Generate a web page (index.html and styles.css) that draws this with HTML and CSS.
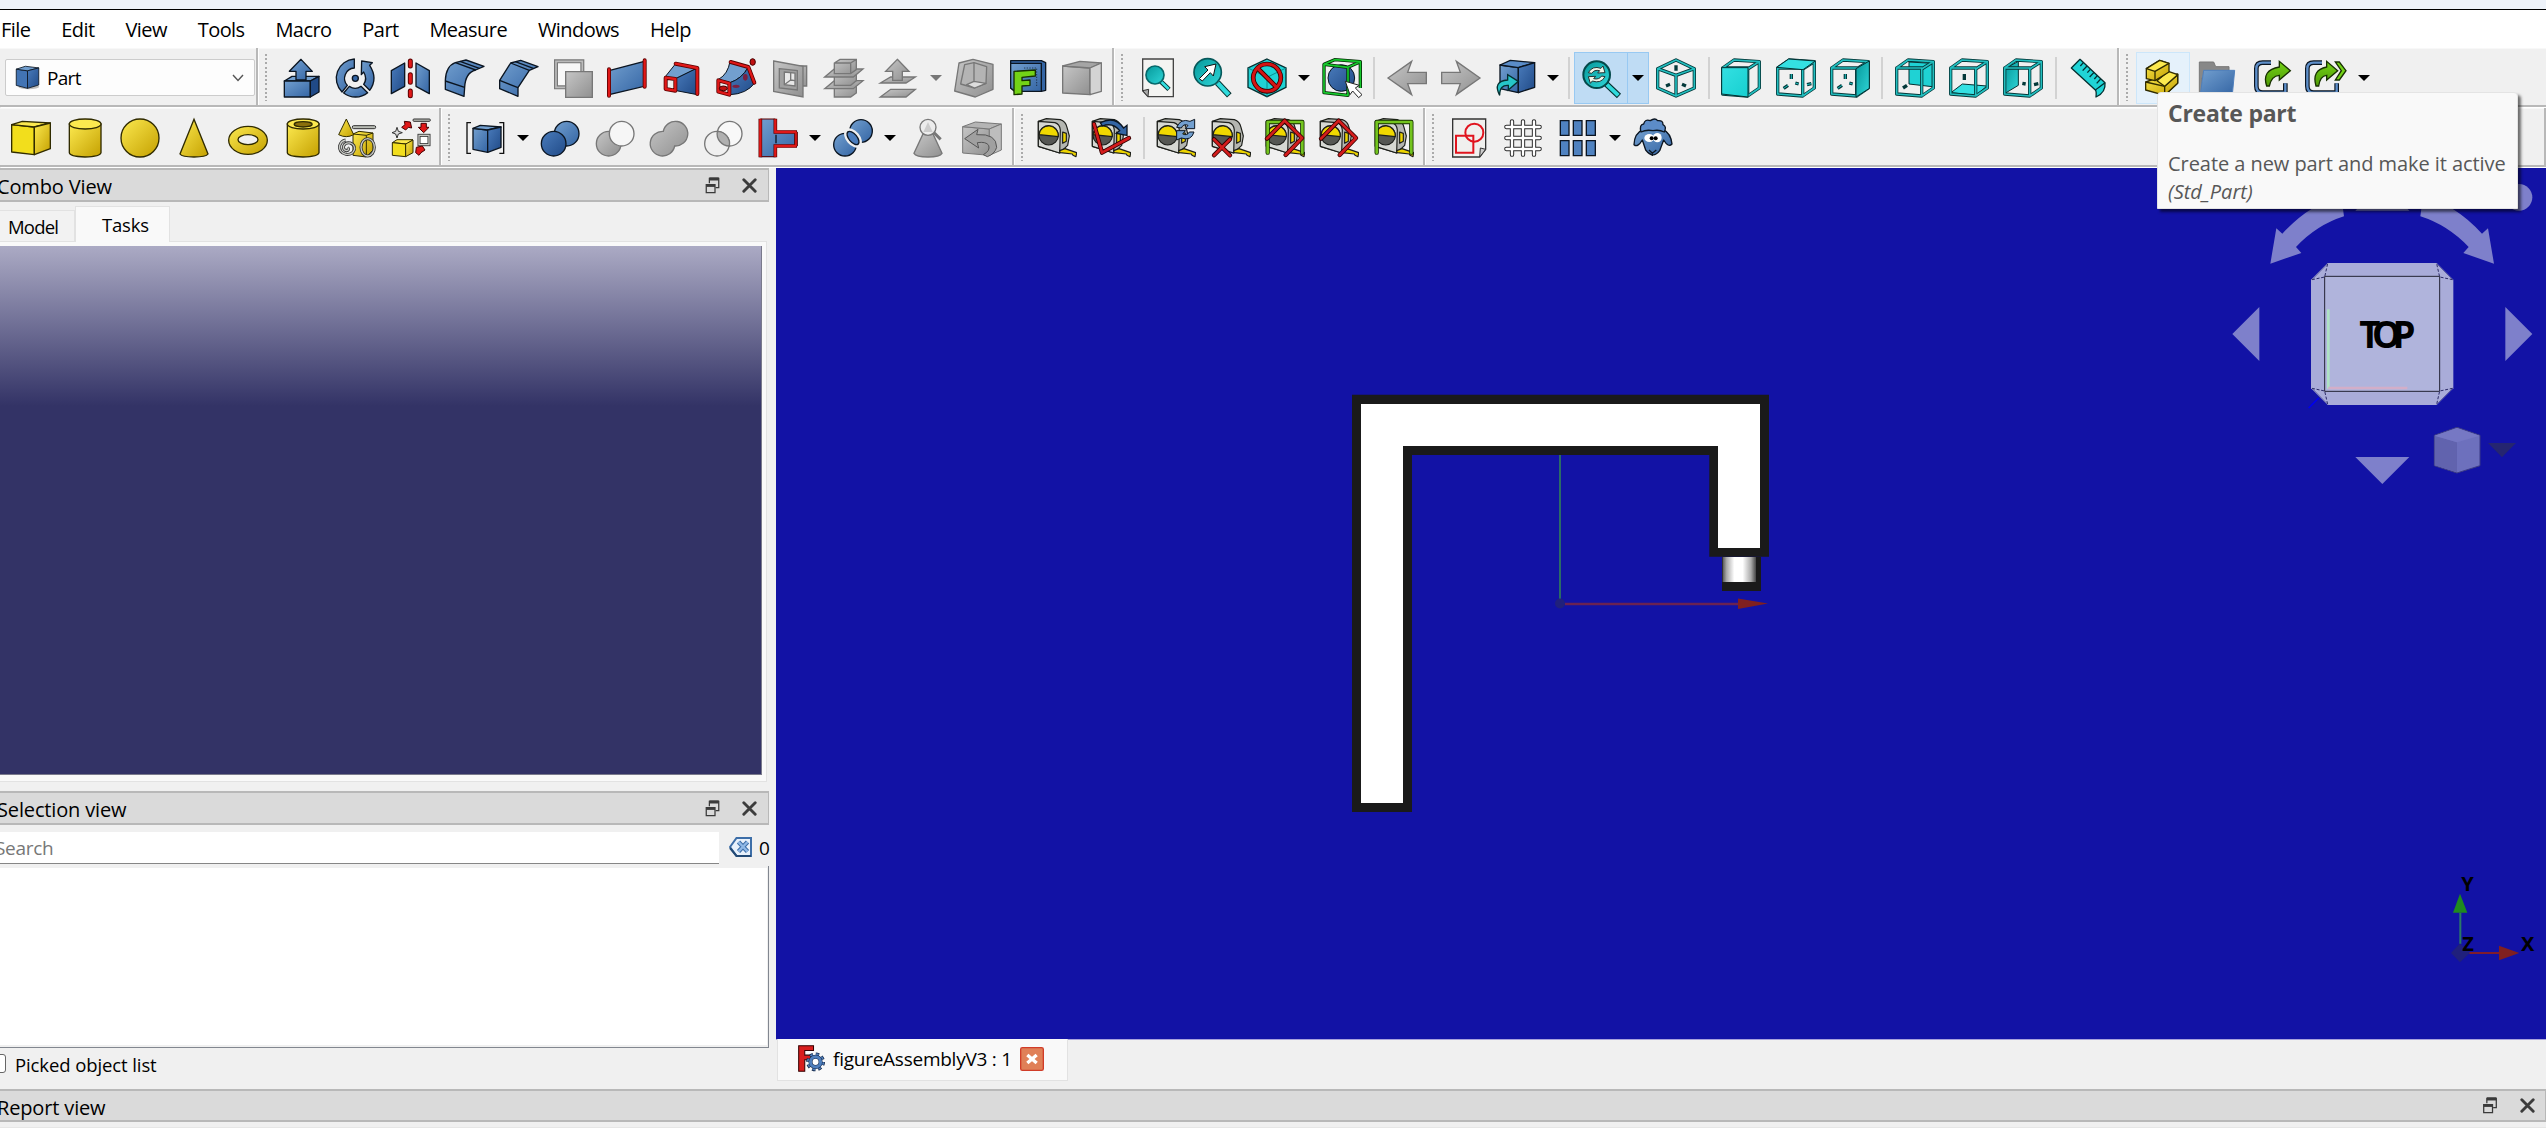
FILE: index.html
```html
<!DOCTYPE html>
<html lang="en">
<head>
<meta charset="utf-8">
<title>FreeCAD</title>
<link rel="stylesheet" href="styles.css">
</head>
<body>
<svg class="defs" width="0" height="0" aria-hidden="true">
  <defs>
    <linearGradient id="gb" x1="0" y1="0" x2="1" y2="1"><stop offset="0" stop-color="#729fcf"/><stop offset="1" stop-color="#3465a4"/></linearGradient>
    <linearGradient id="gd" x1="0" y1="0" x2="1" y2="1"><stop offset="0" stop-color="#4a7cbc"/><stop offset="1" stop-color="#204a87"/></linearGradient>
    <linearGradient id="gy" x1="0" y1="0" x2="1" y2="1"><stop offset="0" stop-color="#fce94f"/><stop offset="1" stop-color="#c4a000"/></linearGradient>
    <linearGradient id="gg" x1="0" y1="0" x2="1" y2="1"><stop offset="0" stop-color="#c6c6c6"/><stop offset="1" stop-color="#909090"/></linearGradient>
    <linearGradient id="gc" x1="0" y1="0" x2="1" y2="1"><stop offset="0" stop-color="#34e0e2"/><stop offset="1" stop-color="#16cfd0"/></linearGradient>
    <linearGradient id="gt" x1="0" y1="0" x2="1" y2="1"><stop offset="0" stop-color="#06989a"/><stop offset="1" stop-color="#2fd6d8"/></linearGradient>
    <linearGradient id="gn" x1="0" y1="0" x2="0" y2="1"><stop offset="0" stop-color="#73d216"/><stop offset="1" stop-color="#4e9a06"/></linearGradient>
    <linearGradient id="pin" x1="0" y1="0" x2="1" y2="0"><stop offset="0" stop-color="#555"/><stop offset=".12" stop-color="#aaa"/><stop offset=".35" stop-color="#fff"/><stop offset=".6" stop-color="#fff"/><stop offset=".85" stop-color="#aaa"/><stop offset="1" stop-color="#444"/></linearGradient>
    <symbol id="frame" viewBox="0 0 120 120">
      <path class="w1" d="M5 30H80V114L5 108ZM5 30 39 6 115 11 80 33M115 11V90L80 114"/>
      <path class="w2" d="M5 30H80V114L5 108ZM5 30 39 6 115 11 80 33M115 11V90L80 114"/>
    </symbol>
    <symbol id="ticks" viewBox="0 0 120 120"><path class="w1" d="M46 48V63M23 91 36 82M58 75 68 78M93 80 106 77"/><path class="w2 thin" d="M46 48V63M23 91 36 82M58 75 68 78M93 80 106 77"/></symbol>
    <symbol id="tape" viewBox="0 0 120 120">
      <g stroke="#1c1e1a" stroke-width="3.500" stroke-linejoin="round">
        <path fill="#b4b6b1" d="M4 10 28 2 70 5Q86 10 90 28L97 54 92 82 68 105 4 85Z"/>
        <path fill="#d6d8d3" d="M4 10 54 14Q68 18 70 36L68 105 4 85Z"/>
        <circle cx="35" cy="52" r="29" fill="#555753"/><path fill="#f0d800" d="M6 50A29 29 0 0 1 64 56Z"/>
        <path fill="#edd400" d="M77 42 88 46V70L77 76Z"/>
        <path fill="#edd400" d="M68 98 84 92 119 104 117 116 108 112 106 108 70 104Z"/>
      </g>
    </symbol>
    <symbol id="float" viewBox="0 0 48 54"><g fill="none" stroke="#3a3a3a" stroke-width="4"><path d="M14 20V4H44V34H34"/><path d="M14 6H44" stroke-width="10"/><path d="M4 24H32V50H4Z"/><path d="M4 27H32" stroke-width="9"/></g></symbol>
    <symbol id="cross" viewBox="0 0 42 42"><path d="M5 5 37 37M37 5 5 37" fill="none" stroke="#3c3c3c" stroke-width="8" stroke-linecap="round"/></symbol>
  </defs>
</svg>

<div class="titlestrip"></div>
<nav class="menu"><span>File</span><span>Edit</span><span>View</span><span>Tools</span><span>Macro</span><span>Part</span><span>Measure</span><span>Windows</span><span>Help</span></nav>

<div class="row">
  <div class="bar bar-wb">
    <div class="combo"><svg class="i26" viewBox="0 0 120 120"><ellipse cx="66" cy="104" rx="50" ry="12" fill="#bbb"/><g fill="url(#gd)" stroke="#0b1521" stroke-width="4"><path d="M6 20 60 28V112L6 98Z" fill="#4274b4"/><path d="M6 20 50 6 114 14 60 28Z" fill="#729fcf"/><path d="M60 28 114 14V96L60 112Z"/></g></svg><span>Part</span><svg class="chev" viewBox="0 0 12 8"><path d="M1 1 6 6.500 11 1" fill="none" stroke="#555" stroke-width="1.400"/></svg></div>
  </div>
  <div class="bar bar-part">
    <i class="grip"></i>
    <b class="btn"><svg viewBox="0 0 120 120"><g stroke="#0b1521" stroke-width="4" stroke-linejoin="round"><path fill="#729fcf" d="M10 69 33 55H114L88 69Z"/><path fill="url(#gb)" d="M10 69H88V117H10Z"/><path fill="#204a87" d="M88 69 114 55V102L88 117Z"/><path fill="url(#gb)" d="M60 4 94 40H75V66H45V40H25Z"/></g></svg></b>
    <b class="btn"><svg viewBox="0 0 120 120"><g stroke="#0b1521" stroke-width="4" fill="url(#gb)" stroke-linejoin="round"><path d="M58 3V30A31 31 0 0 0 37 82L21 102A58 58 0 0 1 58 3Z"/><path d="M26 105 43 85A31 31 0 0 0 78 85L98 104A58 58 0 0 1 26 105Z"/><path d="M80 9 112 14 104 22Q130 62 104 97L86 79Q98 62 86 42L79 50Z"/><circle cx="61" cy="61" r="9" fill="#3465a4"/></g></svg></b>
    <b class="btn"><svg viewBox="0 0 120 120"><g stroke="#0b1521" stroke-width="4" stroke-linejoin="round"><path fill="url(#gd)" d="M4 38 44 15V85L4 107Z"/><path fill="url(#gb)" d="M78 15 118 38V107L78 85Z"/></g><path d="M61 9V24M61 50V73M61 99V113" stroke="#5c0000" stroke-width="15" stroke-linecap="round"/><path d="M61 9V24M61 50V73M61 99V113" stroke="#e01818" stroke-width="9" stroke-linecap="round"/></svg></b>
    <b class="btn"><svg viewBox="0 0 120 120"><g stroke="#0b1521" stroke-width="4" stroke-linejoin="round"><path fill="url(#gb)" d="M34 14 66 6 120 25 95 36Q64 44 62 88L60 115 4 94V67Q6 24 34 14Z"/><path fill="none" d="M34 14 95 36M4 69 62 88M48 10 106 31"/></g></svg></b>
    <b class="btn"><svg viewBox="0 0 120 120"><g stroke="#0b1521" stroke-width="4" stroke-linejoin="round"><path fill="url(#gb)" d="M38 15 68 7 120 26 94 37 60 89V115L5 92V67Z"/><path fill="none" d="M38 15 94 37M5 67 60 89M52 11 106 31"/></g></svg></b>
    <b class="btn"><svg viewBox="0 0 120 120"><path d="M9 10H88V88H9Z" fill="#f8f8f8" stroke="#777" stroke-width="12"/><path d="M9 10H88V88H9Z" fill="none" stroke="#bbb" stroke-width="5"/><path d="M38 41H118V118H38Z" fill="url(#gg)" stroke="#777" stroke-width="4"/></svg></b>
    <b class="btn"><svg viewBox="0 0 120 120"><path fill="url(#gb)" stroke="#0b1521" stroke-width="4" d="M6 38 112 10V85L6 110Z"/><path d="M6 34V113M113 7V86" stroke="#5c0000" stroke-width="12" stroke-linecap="round"/><path d="M6 34V113M113 7V86" stroke="#e01818" stroke-width="7" stroke-linecap="round"/></svg></b>
    <b class="btn"><svg viewBox="0 0 120 120"><g stroke="#0b1521" stroke-width="3"><path fill="#729fcf" d="M44 17 109 30 46 61 12 57Z"/><path fill="url(#gd)" d="M46 61 109 30V110L46 98Z"/></g><g fill="none" stroke-linejoin="round" stroke-linecap="round"><path stroke="#5c0000" stroke-width="12" d="M44 17 109 30V108M14 59 43 63V98L14 93Z"/><path stroke="#e01818" stroke-width="7" d="M44 17 109 30V108M14 59 43 63V98L14 93Z"/></g></svg></b>
    <b class="btn"><svg viewBox="0 0 120 120"><g stroke="#0b1521" stroke-width="3"><path fill="#729fcf" d="M42 10 97 27Q78 62 42 74L8 64Q36 48 42 10Z"/><path fill="url(#gd)" d="M97 27 117 74Q92 108 42 110V74Q78 62 97 27Z"/></g><ellipse cx="88" cy="58" rx="7" ry="10" fill="#7b2040"/><ellipse cx="60" cy="85" rx="11" ry="5" fill="#7b2040"/><g fill="none" stroke-linejoin="round" stroke-linecap="round"><path stroke="#5c0000" stroke-width="12" d="M44 12 97 27 115 74M7 67 40 76V110L7 101Z"/><path stroke="#e01818" stroke-width="7" d="M44 12 97 27 115 74M7 67 40 76V110L7 101Z"/></g><ellipse cx="22" cy="91" rx="12" ry="7" fill="#c01010" stroke="#400" stroke-width="3"/><ellipse cx="110" cy="12" rx="8" ry="10" fill="#c01010" stroke="#400" stroke-width="3"/></svg></b>
    <b class="btn"><svg viewBox="0 0 120 120"><g stroke="#777" stroke-width="4" fill="url(#gg)"><path d="M80 24H110V84H80Z"/><path d="M11 9 99 25V117L11 100Z"/><path d="M28 32 82 38V96L28 90Z" fill="#a0a0a0"/><path d="M43 42 75 45V84L43 80Z" fill="#e8e8e8"/><path d="M43 80 62 66V44M62 66 75 68" fill="none"/></g></svg></b>
    <b class="btn"><svg viewBox="0 0 120 120"><g stroke="#777" stroke-width="4" fill="url(#gg)"><path d="M31 85H80L97 76V105L80 117H31Z"/><path d="M2 92 31 68H117L88 92Z"/><path d="M31 48H80L97 38V68L80 82H31Z"/><path d="M2 57 31 33H117L88 57Z"/><path d="M31 15 48 4H97V35L80 47H31ZM31 15H80V47M80 15 97 4"/></g></svg></b>
    <b class="btn"><svg viewBox="0 0 120 120"><g stroke="#777" stroke-width="4" fill="url(#gg)"><path d="M7 117 38 94H112L84 117Z"/><path d="M7 75 38 57H112L84 75Z"/><path d="M58 4 93 40H73V67H44V40H23Z"/></g></svg></b>
    <b class="dd off"></b>
    <b class="btn"><svg viewBox="0 0 120 120"><g stroke="#777" stroke-width="4" fill="url(#gg)" stroke-linejoin="round"><path d="M15 15 57 4 117 19V94L64 117 2 99Z"/><path d="M32 20 60 14 98 26 96 76 62 90 20 78Z" fill="#b4b4b4"/><path d="M60 14V70L96 76 62 90 38 80 60 70" fill="#ddd"/></g></svg></b>
    <b class="btn"><svg viewBox="0 0 120 120"><g stroke="#0b1521" stroke-width="4" stroke-linejoin="round"><path fill="#3465a4" d="M8 8H100L113 14V97L100 100H20L8 90Z"/><path fill="url(#gb)" d="M8 16H100V100H20L8 90Z"/><path d="M48 30H86V86" fill="none" stroke-dasharray="4 4" stroke-width="2"/><path stroke="#173000" fill="#73d216" d="M18 40 82 36V54L42 58V68L66 66V82L42 84V108L18 110Z"/></g></svg></b>
    <b class="btn"><svg viewBox="0 0 120 120"><g stroke="#777" stroke-width="4" stroke-linejoin="round"><path fill="url(#gg)" d="M2 24 84 30V110L2 105Z"/><path fill="#a5a5a5" d="M2 24 54 10 118 15 84 30Z"/><path fill="#d4d4d4" d="M84 30 118 15V100L84 110Z"/></g></svg></b>
  </div>
  <div class="bar bar-view">
    <i class="grip"></i>
    <b class="btn"><svg viewBox="0 0 120 120"><path d="M14 3H106V116H30L14 98Z" fill="#f4f4f2" stroke="#444" stroke-width="4"/><path d="M14 98 32 94 30 116Z" fill="#aaa" stroke="#333" stroke-width="3"/><path d="M68 70 93 94" stroke="#04302f" stroke-width="14"/><path d="M68 70 92 93" stroke="#34e0e2" stroke-width="8"/><circle cx="51" cy="51" r="27" fill="url(#gt)" stroke="#06686a" stroke-width="5"/></svg></b>
    <b class="btn"><svg viewBox="0 0 120 120"><path d="M76 74 112 112" stroke="#04302f" stroke-width="19"/><path d="M77 75 110 110" stroke="#2fdadc" stroke-width="13"/><circle cx="47" cy="43" r="41" fill="url(#gt)" stroke="#06585a" stroke-width="5"/><path d="M22 62 48 36 38 26 72 18 64 54 55 44 31 69Z" fill="#fff" stroke="#111" stroke-width="3"/></svg></b>
    <b class="btn"><svg viewBox="0 0 120 120"><path d="M60 3 117 30V88L60 116 3 88V30Z" fill="#1fd2d4" stroke="#042f30" stroke-width="4"/><path d="M60 58 117 30M60 58V116M60 58 3 30" stroke="#0a8e90" stroke-width="3"/><g fill="none"><path d="M60 18A41 41 0 1 0 60.100 18M31 30 89 88" stroke="#300" stroke-width="14"/><path d="M60 18A41 41 0 1 0 60.100 18M31 30 89 88" stroke="#d41414" stroke-width="9"/></g></svg></b>
    <b class="dd"></b>
    <b class="btn"><svg viewBox="0 0 120 120"><circle cx="58" cy="60" r="40" fill="url(#gd)" stroke="#0b1521" stroke-width="3"/><g fill="none" stroke-linejoin="round"><path d="M6 19 78 28V112L6 104ZM6 19 38 5 115 11 78 28M115 11V90" stroke="#042a04" stroke-width="10"/><path d="M6 19 78 28V112L6 104ZM6 19 38 5 115 11 78 28M115 11V90" stroke="#16c82c" stroke-width="5"/></g><path d="M70 70 112 82 100 90 120 110 110 119 92 99 84 110Z" fill="#fff" stroke="#222" stroke-width="3"/></svg></b>
    <b class="sep"></b>
    <b class="btn"><svg viewBox="0 0 120 120"><path d="M3 60 74 10 62 43H118V77H62L74 110Z" fill="url(#gg)" stroke="#777" stroke-width="4"/></svg></b>
    <b class="btn"><svg viewBox="0 0 120 120"><path d="M117 60 46 10 58 43H2V77H58L46 110Z" fill="url(#gg)" stroke="#777" stroke-width="4"/></svg></b>
    <b class="btn"><svg viewBox="0 0 120 120"><g stroke="#0b1521" stroke-width="4" stroke-linejoin="round"><path fill="url(#gb)" d="M15 21 70 29V104L15 92Z"/><path fill="#5a8cc8" d="M15 21 46 7 119 14 70 29Z"/><path fill="url(#gd)" d="M70 29 119 14V88L70 104Z"/></g><path d="M14 112Q-8 70 38 66V50L70 70 40 96V82Q14 80 14 112Z" fill="#26c6c8" stroke="#042f30" stroke-width="4"/></svg></b>
    <b class="dd"></b>
    <b class="sep"></b>
    <b class="btn on"><svg viewBox="0 0 120 120"><path d="M76 78 114 114" stroke="#04302f" stroke-width="18"/><path d="M77 79 112 112" stroke="#2fdadc" stroke-width="12"/><circle cx="47" cy="50" r="40" fill="url(#gt)" stroke="#04494a" stroke-width="6"/><path d="M22 44Q34 22 60 31L66 24 72 44 50 45 56 38Q40 34 32 46ZM72 56Q60 78 34 69L28 76 22 56 44 55 38 62Q54 66 62 54Z" fill="#f2f5e8" stroke="#233" stroke-width="3"/></svg></b>
    <b class="dd on"></b>
    <b class="btn"><svg viewBox="0 0 120 120"><g fill="none" stroke-linejoin="round"><path class="w1" d="M60 6 115 32V90L60 114 5 90V32ZM5 32 60 52 115 32M60 52V114M60 22V38M30 84 42 79M78 79 90 84"/><path class="w2" d="M60 6 115 32V90L60 114 5 90V32ZM5 32 60 52 115 32M60 52V114"/></g></svg></b>
    <b class="sep"></b>
    <b class="btn"><svg viewBox="0 0 120 120"><use href="#frame"/><path d="M2 29H81V117L2 108Z" fill="url(#gc)" stroke="#042f30" stroke-width="3"/></svg></b>
    <b class="btn"><svg viewBox="0 0 120 120"><use href="#frame"/><use href="#ticks"/><path d="M2 28 38 3 118 9 81 35Z" fill="#34e0e2" stroke="#042f30" stroke-width="3"/></svg></b>
    <b class="btn"><svg viewBox="0 0 120 120"><use href="#frame"/><use href="#ticks"/><path d="M78 32 118 9V91L78 117Z" fill="url(#gt)" stroke="#042f30" stroke-width="3"/></svg></b>
    <b class="sep"></b>
    <b class="btn"><svg viewBox="0 0 120 120"><path d="M42 12 112 16V86L42 78Z" fill="#1fd2d4" stroke="#042f30" stroke-width="3"/><path class="w1" d="M24 90 36 82"/><use href="#frame"/></svg></b>
    <b class="btn"><svg viewBox="0 0 120 120"><path d="M6 104 40 78 114 84 80 112Z" fill="#34e0e2" stroke="#042f30" stroke-width="3"/><path class="w1" d="M46 48V66"/><use href="#frame"/></svg></b>
    <b class="btn"><svg viewBox="0 0 120 120"><path d="M6 32 46 10V82L6 106Z" fill="url(#gt)" stroke="#042f30" stroke-width="3"/><path class="w1" d="M58 76 68 78M93 80 106 77"/><use href="#frame"/></svg></b>
    <b class="sep"></b>
    <b class="btn"><svg viewBox="0 0 120 120"><path d="M36 4 111 74Q114 104 84 117 86 100 82 96L10 30Z" fill="#20d4d6" stroke="#042f30" stroke-width="4" stroke-linejoin="round"/><path d="M82 96Q92 88 111 74M46 14 37 24M57 24 44 38M67 34 58 44M78 43 65 57M88 53 79 63M98 63 86 76" fill="none" stroke="#042f30" stroke-width="4"/></svg></b>
  </div>
  <div class="bar bar-struct">
    <i class="grip"></i>
    <b class="btn hover"><svg viewBox="0 0 120 120"><g stroke="#302b00" stroke-width="4" fill="url(#gy)" stroke-linejoin="round"><path d="M8 72 42 60 104 48V75L65 112 8 96Z"/><path d="M65 85 104 50V76L65 112ZM8 72 65 85"/><path d="M42 68 76 40 104 50 65 85Z" fill="#fce94f"/><path d="M10 32 50 7 78 16V42L36 68 10 62Z"/><path d="M10 32 50 7 78 16 36 40Z" fill="#fce94f"/><path d="M36 40V68"/></g></svg></b>
    <b class="btn"><svg viewBox="0 0 120 120"><path d="M7 12H50L56 26H96V60H14V112H7Z" fill="#888" stroke="#777" stroke-width="3"/><path d="M20 37H113L106 110H10Z" fill="url(#gb)" stroke="#4f80bd" stroke-width="3"/></svg></b>
    <b class="btn"><svg viewBox="0 0 120 120"><path d="M57 14H32Q13 14 13 32V84Q13 104 32 104H100V76" fill="none" stroke="#0b1521" stroke-width="14"/><path d="M57 14H32Q13 14 13 32V84Q13 104 32 104H100V76" fill="none" stroke="#5e8fca" stroke-width="7"/><path d="M44 84Q28 36 82 27V10L115 38 82 66V52Q58 54 52 84Z" fill="url(#gn)" stroke="#173000" stroke-width="4"/></svg></b>
    <b class="btn"><svg viewBox="0 0 120 120"><path d="M48 14H23Q4 14 4 32V84Q4 104 23 104H92V76" fill="none" stroke="#0b1521" stroke-width="14"/><path d="M48 14H23Q4 14 4 32V84Q4 104 23 104H92V76" fill="none" stroke="#5e8fca" stroke-width="7"/><path d="M30 84Q16 36 62 27V10L95 38 62 66V52Q42 54 38 84Z" fill="url(#gn)" stroke="#173000" stroke-width="4"/><path d="M88 12H100L120 38 100 66H88L106 38Z" fill="#73d216" stroke="#173000" stroke-width="4"/></svg></b>
    <b class="dd"></b>
  </div>
</div>

<div class="row">
  <div class="bar bar-prim">
    <b class="btn"><svg viewBox="0 0 120 120"><g stroke="#302b00" stroke-width="4" stroke-linejoin="round"><path fill="#f2de1c" d="M2 20 70 27V110L2 102Z"/><path fill="#fce94f" d="M2 20 34 10 118 15 70 27Z"/><path fill="url(#gy)" d="M70 27 118 15V92L70 110Z"/></g></svg></b>
    <b class="btn"><svg viewBox="0 0 120 120"><g stroke="#302b00" stroke-width="4"><path fill="url(#gy)" d="M13 18V104Q14 116 60 117 106 116 108 104V18Z"/><ellipse cx="60.500" cy="18" rx="47.500" ry="15" fill="#fce94f"/></g></svg></b>
    <b class="btn"><svg viewBox="0 0 120 120"><circle cx="60" cy="60" r="57" fill="url(#gy)" stroke="#302b00" stroke-width="4"/></svg></b>
    <b class="btn"><svg viewBox="0 0 120 120"><path fill="url(#gy)" stroke="#302b00" stroke-width="4" d="M60 4 102 108Q96 117 60 117 24 117 18 108Z"/></svg></b>
    <b class="btn"><svg viewBox="0 0 120 120"><path fill="url(#gy)" fill-rule="evenodd" stroke="#302b00" stroke-width="4" d="M2 67A58 42 0 1 0 118 67 58 42 0 1 0 2 67ZM30 65A30 15 0 1 1 90 65 30 15 0 1 1 30 65Z"/></svg></b>
    <b class="btn"><svg viewBox="0 0 120 120"><g stroke="#302b00" stroke-width="4"><path fill="url(#gy)" d="M13 18V104Q14 116 60 117 106 116 108 104V18Z"/><ellipse cx="60.500" cy="18" rx="47.500" ry="15" fill="#fce94f"/><ellipse cx="60.500" cy="19" rx="27" ry="8" fill="#8a6f0c"/></g></svg></b>
    <b class="btn"><svg viewBox="0 0 120 120"><g stroke="#302b00" stroke-width="3" fill="url(#gy)"><path d="M48 48 66 40 108 45V96L88 117 48 112ZM48 48 88 52V117M88 52 108 45"/><path d="M28 3 50 50Q28 62 5 50Z"/></g><rect x="46" y="23" width="70" height="9" rx="4" fill="#babdb6" stroke="#333" stroke-width="3"/><g fill="none"><path d="M32 88q6 8-3 10-12-2-9-14 5-12 20-9 15 6 12 20-6 16-25 14-22-6-19-26 4-14 18-17" stroke="#333" stroke-width="9"/><path d="M32 88q6 8-3 10-12-2-9-14 5-12 20-9 15 6 12 20-6 16-25 14-22-6-19-26 4-14 18-17" stroke="#c8cac5" stroke-width="4"/><ellipse cx="92" cy="88" rx="20" ry="26" stroke="#333" stroke-width="9"/><ellipse cx="92" cy="88" rx="20" ry="26" stroke="#c8cac5" stroke-width="4"/></g></svg></b>
    <b class="btn"><svg viewBox="0 0 120 120"><g stroke="#302b00" stroke-width="3"><path fill="#fce94f" d="M4 74 18 65H66L48 78Z"/><path fill="#f2de1c" d="M4 74 44 78V116L4 112Z"/><path fill="url(#gy)" d="M44 78 66 66V104L44 116Z"/></g><path d="M18 28 22 40 34 44 22 48 18 60 14 48 3 44 14 40Z" fill="#ddd" stroke="#333" stroke-width="3"/><rect x="66" y="3" width="52" height="7" rx="3" fill="#babdb6" stroke="#333" stroke-width="3"/><rect x="84" y="52" width="30" height="28" fill="#fff" stroke="#333" stroke-width="9"/><rect x="84" y="52" width="30" height="28" fill="none" stroke="#c8cac5" stroke-width="4"/><g fill="#e01818" stroke="#400" stroke-width="3"><path d="M40 10 58 12 62 30 52 28 44 36 32 28 42 20Z"/><path d="M90 16H106V28H114L98 44 82 28H90Z"/><path d="M94 84 102 96 90 104 84 112 74 104 76 88Z"/></g></svg></b>
  </div>
  <div class="bar bar-bool">
    <i class="grip"></i>
    <b class="btn"><svg viewBox="0 0 120 120"><path d="M18 14H6V106H18M103 14H116V106H103" fill="none" stroke="#111" stroke-width="4"/><g stroke="#0b1521" stroke-width="4" stroke-linejoin="round"><path fill="url(#gb)" d="M24 31 68 36V103L24 94Z"/><path fill="#729fcf" d="M24 31 46 22 108 27 68 36Z"/><path fill="url(#gd)" d="M68 36 108 27V88L68 103Z"/></g></svg></b>
    <b class="dd"></b>
    <b class="btn"><svg viewBox="0 0 120 120"><g stroke="#0b1521" stroke-width="4"><circle cx="80" cy="47" r="37" fill="url(#gb)"/><circle cx="41" cy="77" r="37" fill="url(#gd)"/></g></svg></b>
    <b class="btn"><svg viewBox="0 0 120 120"><g stroke="#777" stroke-width="4"><circle cx="41" cy="77" r="37" fill="url(#gg)"/><circle cx="80" cy="47" r="37" fill="#f6f6f6"/></g></svg></b>
    <b class="btn"><svg viewBox="0 0 120 120"><path stroke="#777" stroke-width="4" fill="url(#gg)" d="M43 40A37 37 0 1 1 77 84 37 37 0 1 1 43 40Z"/></svg></b>
    <b class="btn"><svg viewBox="0 0 120 120"><g stroke="#777" stroke-width="4"><circle cx="80" cy="47" r="37" fill="#f8f8f8"/><circle cx="42" cy="77" r="37" fill="#f0f0f0"/><path d="M43 40A37 37 0 0 1 79 84 37 37 0 0 1 43 40Z" fill="#b0b0b0"/></g></svg></b>
    <b class="btn"><svg viewBox="0 0 120 120"><path d="M3 3H54V40H118V86H54V118H3Z" fill="url(#gb)"/><path d="M54 50V76" stroke="#0b1521" stroke-width="4"/><g fill="none"><path d="M7 3H52V42H114V84H52V116H7Z" stroke="#5c0000" stroke-width="3"/><path d="M7 2V118M52 2V42H117M52 118V84H117M114 42V84" stroke="#5c0000" stroke-width="11"/><path d="M7 4V116M52 4V42H115M52 116V84H115" stroke="#e01818" stroke-width="7"/><path d="M114 42V84" stroke="#e01818" stroke-width="5"/></g></svg></b>
    <b class="dd"></b>
    <b class="btn"><svg viewBox="0 0 120 120"><g stroke="#0b1521" stroke-width="4"><circle cx="84" cy="39" r="34" fill="url(#gb)"/><circle cx="36" cy="80" r="34" fill="url(#gb)"/><ellipse cx="60" cy="60" rx="28" ry="16" transform="rotate(50 60 60)" fill="#efefef" stroke="#efefef" stroke-width="10"/><ellipse cx="60" cy="60" rx="24" ry="12" transform="rotate(50 60 60)" fill="#4a7cbc"/></g></svg></b>
    <b class="dd"></b>
    <b class="btn"><svg viewBox="0 0 120 120"><g stroke="#777" stroke-width="4"><path fill="url(#gg)" d="M45 48H75L102 106Q96 117 60 117 24 117 18 106Z"/><path d="M76 42 98 64" stroke-width="9"/><circle cx="60" cy="28" r="24" fill="#ececec"/><path d="M60 12 74 42H46Z" fill="#ccc" stroke="none"/></g></svg></b>
    <b class="btn"><svg viewBox="0 0 120 120"><g stroke="#777" stroke-width="3" stroke-linejoin="round"><path fill="url(#gg)" d="M2 26 82 33V112L2 105Z"/><path fill="#b5b5b5" d="M2 26 40 12 118 18 82 33Z"/><path fill="#bdbdbd" d="M82 33 118 18V96L82 112Z"/><path stroke="#555" fill="#a0a0a0" d="M8 62 48 34 44 50Q104 46 104 88 98 108 76 116L64 110Q86 98 80 82 72 70 46 74L50 90Z"/></g></svg></b>
  </div>
  <div class="bar bar-meas">
    <i class="grip"></i>
    <b class="btn"><svg viewBox="0 0 120 120"><use href="#tape"/></svg></b>
    <b class="btn"><svg viewBox="0 0 120 120"><use href="#tape"/><path d="M28 14Q72-8 98 30L108 22V52L76 46 86 38Q66 12 34 24Z" fill="#3465a4" stroke="#0b1521" stroke-width="4"/><g fill="none" stroke-linecap="round" stroke-linejoin="round"><path d="M9 18 33 104 114 60" stroke="#300" stroke-width="13"/><path d="M9 18 33 104 114 60" stroke="#d41c1c" stroke-width="8"/></g></svg></b>
    <b class="sep"></b>
    <b class="btn"><svg viewBox="0 0 120 120"><use href="#tape"/><g fill="#729fcf" stroke="#0b1521" stroke-width="3"><path d="M62 28Q74 0 102 10L116 4V32H88L96 22Q82 16 76 30ZM114 42Q106 70 76 60L62 66V38H88L80 48Q94 54 100 42Z"/></g></svg></b>
    <b class="btn"><svg viewBox="0 0 120 120"><use href="#tape"/><path d="M9 64 57 112M57 64 9 112" stroke="#300" stroke-width="13" stroke-linecap="round"/><path d="M9 64 57 112M57 64 9 112" stroke="#d41c1c" stroke-width="8" stroke-linecap="round"/></svg></b>
    <b class="btn"><svg viewBox="0 0 120 120"><use href="#tape"/><g fill="none" stroke-linejoin="round" stroke-linecap="round"><path d="M8 104V12H112V104" stroke="#173000" stroke-width="13"/><path d="M8 104V12H112V104" stroke="#73c41e" stroke-width="8"/><path d="M6 62 59 8 111 60 62 111" stroke="#300" stroke-width="13"/><path d="M6 62 59 8 111 60 62 111" stroke="#d41c1c" stroke-width="8"/></g></svg></b>
    <b class="btn"><svg viewBox="0 0 120 120"><use href="#tape"/><g fill="none" stroke-linejoin="round" stroke-linecap="round"><path d="M6 62 59 8 111 60 62 111" stroke="#300" stroke-width="13"/><path d="M6 62 59 8 111 60 62 111" stroke="#d41c1c" stroke-width="8"/></g></svg></b>
    <b class="btn"><svg viewBox="0 0 120 120"><use href="#tape"/><g fill="none" stroke-linejoin="round" stroke-linecap="round"><path d="M8 104V12H112V104" stroke="#173000" stroke-width="13"/><path d="M8 104V12H112V104" stroke="#73c41e" stroke-width="8"/></g></svg></b>
  </div>
  <div class="bar bar-draft">
    <i class="grip"></i>
    <b class="btn"><svg viewBox="0 0 120 120"><path d="M11 3H110V94L92 117H11Z" fill="#f0f0ee" stroke="#333" stroke-width="4"/><path d="M110 94 94 90 92 117Z" fill="#ccc" stroke="#333" stroke-width="3"/><g fill="none" stroke="#e0141e" stroke-width="6"><circle cx="76" cy="44" r="27"/><path d="M21 53H73V104H21Z"/></g></svg></b>
    <b class="btn"><svg viewBox="0 0 120 120"><g fill="none" stroke-linecap="round"><path d="M27 10V110M60 10V110M93 10V110M10 27H110M10 60H110M10 93H110" stroke="#2a2a2a" stroke-width="13"/><path d="M27 10V110M60 10V110M93 10V110M10 27H110M10 60H110M10 93H110" stroke="#fff" stroke-width="7"/></g></svg></b>
    <b class="btn"><svg viewBox="0 0 120 120"><g fill="#4f82c0" stroke="#0b1521" stroke-width="4"><path d="M7 8H33V52H7ZM46 8H72V52H46ZM85 8H112V52H85ZM7 68H33V113H7ZM46 68H72V113H46ZM85 68H112V113H85Z"/></g></svg></b>
    <b class="dd"></b>
    <b class="btn"><svg viewBox="0 0 120 120"><g stroke="#0b1521" stroke-width="4" stroke-linejoin="round"><path fill="url(#gb)" d="M30 34Q4 46 3 80 14 90 28 66L38 96Q60 124 80 98L92 66Q106 90 117 78 114 46 90 34Z"/><path fill="#5c8cc8" d="M24 42Q18 20 32 18 36 2 52 8 66-2 74 8 90 6 90 20 102 26 94 42 78 34 60 38 40 34 24 42Z"/><path fill="none" d="M48 96 58 106 70 96M58 106V114"/></g><ellipse cx="49" cy="60" rx="15" ry="12" fill="#fff"/><ellipse cx="73" cy="59" rx="13" ry="14" fill="#fff"/><circle cx="56" cy="61" r="6"/><circle cx="68" cy="61" r="6"/></svg></b>
  </div>
</div>

<div class="main">
  <aside class="dock">
    <header class="dtitle"><span>Combo View</span><svg class="fl"><use href="#float"/></svg><svg class="cl"><use href="#cross"/></svg></header>
    <div class="tabs"><span class="tab model">Model</span><span class="tab tasks">Tasks</span></div>
    <div class="pane"><div class="tasksview"></div></div>
    <header class="dtitle sel"><span>Selection view</span><svg class="fl"><use href="#float"/></svg><svg class="cl"><use href="#cross"/></svg></header>
    <div class="searchrow"><div class="search">Search</div><svg class="clear" viewBox="0 0 46 40"><path d="M15 2H44V38H15L2 20Z" fill="#e8f1fb" stroke="#3d6ea8" stroke-width="4"/><path d="M2 22 15 38H44" fill="none" stroke="#234a75" stroke-width="4"/><path d="M19 10 37 29M37 10 19 29" stroke="#3d6ea8" stroke-width="9"/><path d="M19 10 37 29M37 10 19 29" stroke="#8fb8e6" stroke-width="5"/></svg><span>0</span></div>
    <div class="list"></div>
    <div class="picked"><i class="check"></i><span>Picked object list</span></div>
  </aside>
  <section class="mdi">
    <svg class="scene" viewBox="776 168 1770 871">
      <path d="M1560 455V600" stroke="#2a6a66" stroke-width="2"/>
      <path d="M1565 604H1739" stroke="#6a2252" stroke-width="2.500"/>
      <path d="M1738 598.500 1768 603.500 1738 609Z" fill="#802020"/>
      <circle cx="1560" cy="603.500" r="5" fill="#20207c"/>
      <path d="M1352 394.700H1769V556.700H1709.300V455H1412V812H1352Z" fill="#1a1a1a"/>
      <path d="M1361 404H1760V548H1718V446H1403V803H1361Z" fill="#fff"/>
      <path d="M1722 556.700H1761V591H1722Z" fill="#1a1a1a"/>
      <path d="M1722.600 557H1756V582H1722.600Z" fill="url(#pin)"/>
      <g transform="translate(2200 180) scale(.33333)">
        <g fill="#7e80cb">
          <path d="M211 251 229 145 247 161Q330 70 424 50L432 109Q350 135 288 201L304 219Z"/>
          <path d="M882 251 864 145 846 161Q763 70 669 50L661 109Q743 135 806 201L790 219Z"/>
          <path d="M97 462 178 381V543ZM997 462 916 381V543ZM466 831H628L547 912ZM466 92H628L547 11Z"/>
          <circle cx="957" cy="52" r="40"/>
        </g>
        <path d="M326 684 356 654" stroke="#0000f0" stroke-width="5"/>
        <path d="M383 249H710L760 299V625L710 675H383L333 625V299Z" fill="#a9acd9"/>
        <path d="M374 289H719V634H374Z" fill="#b0b4dc" stroke="#222233" stroke-width="3"/>
        <path d="M336 299 374 291 383 251M758 299 719 291 710 251M336 625 374 633 383 673M758 625 719 633 710 673" fill="none" stroke="#2a2a66" stroke-width="3" stroke-dasharray="9 5"/>
        <path d="M336 299 383 251M758 299 710 251M336 625 383 673M758 625 710 673" fill="none" stroke="#3c3c88" stroke-width="2"/>
        <path d="M385 388V626" stroke="#aee3c4" stroke-width="8"/><path d="M385 624H622" stroke="#d3aec8" stroke-width="8"/>
        <text class="top" x="478" y="504">TOP</text>
        <path d="M703 766 771 742 840 766V857L771 879 703 857Z" fill="#6d70bd" stroke="#3b3b85" stroke-width="3"/>
        <path d="M704 767 771 787V877L704 856Z" fill="#6163ae"/><path d="M704 767 771 744 839 767 771 787Z" fill="#7678c4"/>
        <path d="M864 789H948L906 832Z" fill="#252570"/>
      </g>
      <g transform="translate(2346 860) scale(.33333)">
        <path d="M343 158V252" stroke="#2a7a66" stroke-width="6"/><path d="M342 101 364 158H321Z" fill="#1f8a1f"/>
        <path d="M366 279H462" stroke="#801c2c" stroke-width="6"/><path d="M520 279 459 257V301Z" fill="#802020"/>
        <path d="M342 250 372 279 342 307 315 279Z" fill="#20207c"/>
        <text class="ax" x="346" y="94">Y</text><text class="ax" x="349" y="273">Z</text><text class="ax" x="525" y="273">X</text>
      </g>
    </svg>
    <div class="doctabs"><div class="doctab">
      <svg class="fc" viewBox="0 0 80 80"><path d="M2 2H46V16H20V30H38V44H20V78H2Z" fill="#d81e1e" stroke="#300" stroke-width="3"/><circle cx="52" cy="50" r="21" fill="none" stroke="#15294a" stroke-width="14" stroke-dasharray="9 7.500"/><circle cx="52" cy="50" r="21" fill="none" stroke="#4f7fbd" stroke-width="9" stroke-dasharray="7 9.500" stroke-dashoffset="-1"/><circle cx="52" cy="50" r="15" fill="#fff" stroke="#15294a" stroke-width="12"/><circle cx="52" cy="50" r="15" fill="none" stroke="#4f7fbd" stroke-width="9"/></svg>
      <span>figureAssemblyV3 : 1</span>
      <svg class="x" viewBox="0 0 72 72"><rect x="2" y="2" width="68" height="68" rx="5" fill="#e08058" stroke="#d03c28" stroke-width="4"/><path d="M22 24 50 48M50 24 22 48" stroke="#fff" stroke-width="10"/></svg>
    </div></div>
  </section>
</div>

<header class="dtitle report"><span>Report view</span><svg class="fl"><use href="#float"/></svg><svg class="cl"><use href="#cross"/></svg></header>
<div class="log"></div>

<div class="tip"><strong>Create part</strong><p>Create a new part and make it active</p><em>(Std_Part)</em></div>
</body>
</html>
```
FILE: styles.css
```css
* { box-sizing: border-box; }
body {
  margin: 0; width: 2546px; height: 1145px; overflow: hidden; position: relative;
  display: flex; flex-direction: column;
  background: #f0f0f0; color: #000;
  font: 20px/26px "Open Sans", "Noto Sans", sans-serif;
  letter-spacing: -.15px;
}
.defs { position: absolute; }
.titlestrip { height: 10px; flex: none; background: #eef3fa; border-bottom: 1px solid #000; }
.menu {
  height: 38px; flex: none; background: #fff; display: flex; gap: 30.800px;
  padding: 7px 0 0 1px; letter-spacing: -.55px;
}
.row { display: flex; height: 60px; flex: none; }
.bar {
  display: flex; align-items: center; position: relative; flex: none;
  border-right: 2px solid #b8b8b8; border-bottom: 2px solid #b8b8b8;
  height: 59px; padding-top: 3px; box-shadow: 1px 1px 0 #fff, inset 0 1px 0 #f8f8f8;
}
.bar-wb { width: 258px; padding: 2px 0 0 5px; }
.bar-part { width: 856px; padding-left: 16px; }
.bar-view { width: 1005px; padding-left: 17px; }
.bar-struct { flex: 1; padding-left: 17px; border-right: 0; }
.bar-prim { width: 441px; padding-left: 4px; }
.bar-bool { width: 573px; padding-left: 17px; }
.bar-meas { width: 411px; padding-left: 16px; }
.bar-draft { flex: 1; padding-left: 17px; }
.grip {
  position: absolute; left: 7px; top: 6px; width: 2px; height: 47px;
  background: repeating-linear-gradient(#aaa 0 2px, transparent 2px 4.200px);
}
.btn { width: 54.300px; height: 52px; flex: none; display: flex; align-items: center; justify-content: center; }
.btn svg { width: 40px; height: 40px; overflow: visible; }
.dd { width: 20.900px; height: 52px; flex: none; display: flex; align-items: center; justify-content: center; }
.dd::before { content: ""; border: 6px solid transparent; border-top-color: #000; border-bottom: 0; }
.dd.off::before { border-top-color: #777; }
.sep { width: 10.600px; height: 42px; flex: none; display: flex; justify-content: center; }
.sep::before { content: ""; width: 2px; background: #d2d2d2; }
.on { background: #bfdcf4; border: 1px solid #98c9f2; }
.dd.on { border-left: 0; }
.hover { background: #e5f1fb; border: 1px solid #cce6fa; }
.w1, .w2 { fill: none; stroke: #04393a; stroke-width: 10; stroke-linejoin: round; }
.w2 { stroke: #22bfc0; stroke-width: 5; }
.w2.thin { stroke-width: 3; }

.combo {
  width: 250px; height: 37px; background: #fdfdfd; border: 1px solid #ccc; border-radius: 2px;
  display: flex; align-items: center; padding: 0 10px 0 8px;
  font-size: 19px; letter-spacing: -.7px;
}
.i26 { width: 27px; height: 25px; margin-right: 6px; }
.chev { width: 12px; height: 8px; margin-left: auto; }

.main { display: flex; height: 921px; flex: none; }
.dock { width: 776px; display: flex; flex-direction: column; padding-right: 7px; }
.dtitle {
  height: 34px; flex: none; background: #dadada; border: 2px solid #b8b8b8; border-left: 0; border-right-width: 1px;
  display: flex; align-items: center; padding-right: 11px;
}
.dtitle span { margin-left: -3px; flex: 1; position: relative; top: 2px; }
.fl { width: 15px; height: 17px; margin-right: 22px; }
.cl { width: 15px; height: 15px; }
.tabs { height: 39px; flex: none; display: flex; align-items: flex-end; font-size: 18.500px; }
.tab { border: 1px solid #e2e2e2; border-bottom: 0; }
.model { width: 76px; height: 31px; padding: 3px 0 0 8px; margin-left: -1px; background: #f2f2f2; letter-spacing: -.8px; }
.tasks { width: 95px; height: 36px; padding: 5px 0 0 26px; background: #f9f9f9; letter-spacing: -.2px; position: relative; margin-bottom: -1px; }
.pane { height: 541px; flex: none; margin-right: 2px; background: #f9f9f9; border: 1px solid #e2e2e2; border-left: 0; padding: 4px 4px 6px 0; }
.tasksview {
  height: 529px; border: solid #7a7a8c; border-width: 0 1px 1px 0;
  background: linear-gradient(#abaac4, #333366 30.300%);
}
.sel { margin-top: 9px; }
.searchrow { display: flex; align-items: center; height: 32px; margin-top: 7px; flex: none; font-size: 19px; }
.search { width: 719px; height: 32px; background: #fff; border-bottom: 1px solid #868686; color: #777; padding-top: 3px; text-indent: -5px; letter-spacing: -.3px; }
.clear { width: 23px; height: 20px; margin: 0 7px 3px 10px; }
.searchrow span { width: 10px; }
.list { height: 182px; flex: none; margin-top: 2px; background: #fff; border: solid #828790; border-width: 0 1px 1px 0; box-shadow: inset 0 2px 0 #f0f0f0, inset -1px -2px 0 #f0f0f0; }
.picked { display: flex; align-items: center; height: 30px; font-size: 18.500px; letter-spacing: -.1px; }
.check { width: 13px; height: 19px; margin: 0 9px 0 -7px; border: 1px solid #666; border-radius: 3px; background: #fff; }
.picked span { padding-top: 3px; }

.mdi { flex: 1; display: flex; flex-direction: column; }
.scene { width: 1770px; height: 871px; flex: none; background: #1212a5; }
.top { font: bold 110px "Open Sans", sans-serif; letter-spacing: -26px; }
.ax { font: bold 60px "Noto Sans", sans-serif; }
.doctabs { border-top: 1px solid #a8a2dc; padding-left: 1px; }
.doctab {
  width: 291px; height: 42px; margin-top: -1px; background: #f9f9f9; border: 1px solid #e2e2e2; border-top: 0;
  display: flex; align-items: center; padding: 0 0 3px 20px; font-size: 19px; letter-spacing: -.25px;
}
.fc { width: 27px; height: 27px; margin-right: 8px; }
.doctab span { flex: none; width: 187px; padding-top: 2px; }
.x { width: 24px; height: 24px; margin-top: 2px; }

.report { height: 33px; border-right-width: 1px; }
.report.dtitle { padding-right: 10px; }
.report .fl { width: 16px; height: 17px; }
.log { flex: 1; margin-top: 5px; background: #fff; border-top: 1px solid #e6e6e6; }

.tip {
  position: absolute; left: 2157px; top: 92px; width: 361px; height: 117px;
  background: #f9f9f9; border: 1px solid #e4e4e4; border-radius: 4px 4px 0 0;
  box-shadow: 3px 3px 3px rgba(0, 0, 0, .55); color: #575757; padding: 5px 0 0 10px; white-space: nowrap;
}
.tip strong { display: block; font-size: 23px; line-height: 30px; letter-spacing: -.25px; }
.tip p { margin: 22px 0 0; line-height: 28px; letter-spacing: -.06px; }
.tip em { display: block; line-height: 28px; letter-spacing: 0; }
```
